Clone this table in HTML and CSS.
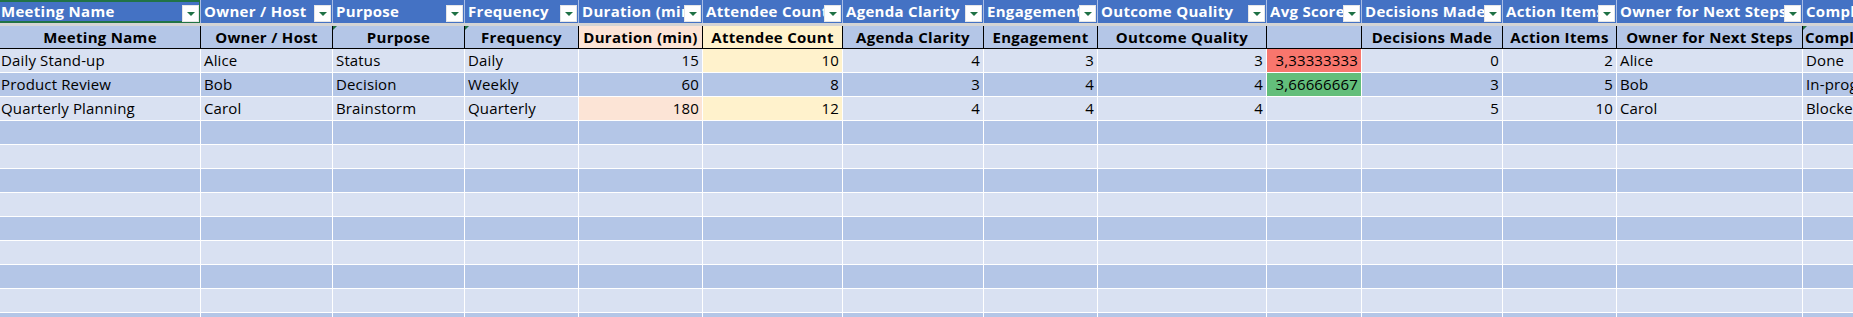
FILE: index.html
```html
<!DOCTYPE html>
<html>
<head>
<meta charset="utf-8">
<link rel="stylesheet" href="styles.css">
</head>
<body>
<div class="sheet">
  <div class="row hdr1">
    <div class="cell sel"><span class="lbl">Meeting Name</span><span class="dd"></span></div>
    <div class="cell"><span class="lbl">Owner / Host</span><span class="dd"></span></div>
    <div class="cell"><span class="lbl">Purpose</span><span class="dd"></span></div>
    <div class="cell"><span class="lbl">Frequency</span><span class="dd"></span></div>
    <div class="cell"><span class="lbl">Duration (min)</span><span class="dd"></span></div>
    <div class="cell"><span class="lbl">Attendee Count</span><span class="dd"></span></div>
    <div class="cell"><span class="lbl">Agenda Clarity</span><span class="dd"></span></div>
    <div class="cell"><span class="lbl">Engagement</span><span class="dd"></span></div>
    <div class="cell"><span class="lbl">Outcome Quality</span><span class="dd"></span></div>
    <div class="cell"><span class="lbl">Avg Score</span><span class="dd"></span></div>
    <div class="cell"><span class="lbl">Decisions Made</span><span class="dd"></span></div>
    <div class="cell"><span class="lbl">Action Items</span><span class="dd"></span></div>
    <div class="cell"><span class="lbl">Owner for Next Steps</span><span class="dd"></span></div>
    <div class="cell"><span class="lbl">Completion Status</span><span class="dd"></span></div>
  </div>
  <div class="row hdr2">
    <div class="cell">Meeting Name</div>
    <div class="cell">Owner / Host</div>
    <div class="cell"><i class="err"></i>Purpose</div>
    <div class="cell"><i class="err"></i>Frequency</div>
    <div class="cell peach">Duration (min)</div>
    <div class="cell yellow">Attendee Count</div>
    <div class="cell">Agenda Clarity</div>
    <div class="cell">Engagement</div>
    <div class="cell">Outcome Quality</div>
    <div class="cell"></div>
    <div class="cell">Decisions Made</div>
    <div class="cell">Action Items</div>
    <div class="cell">Owner for Next Steps</div>
    <div class="cell left"><i class="err"></i>Completion Status</div>
  </div>
  <div class="row data light">
    <div class="cell first">Daily Stand-up</div>
    <div class="cell">Alice</div>
    <div class="cell">Status</div>
    <div class="cell">Daily</div>
    <div class="cell num">15</div>
    <div class="cell num yellow">10</div>
    <div class="cell num">4</div>
    <div class="cell num">3</div>
    <div class="cell num">3</div>
    <div class="cell num red">3,33333333</div>
    <div class="cell num">0</div>
    <div class="cell num">2</div>
    <div class="cell">Alice</div>
    <div class="cell">Done</div>
  </div>
  <div class="row data dark">
    <div class="cell first">Product Review</div>
    <div class="cell">Bob</div>
    <div class="cell">Decision</div>
    <div class="cell">Weekly</div>
    <div class="cell num">60</div>
    <div class="cell num">8</div>
    <div class="cell num">3</div>
    <div class="cell num">4</div>
    <div class="cell num">4</div>
    <div class="cell num green">3,66666667</div>
    <div class="cell num">3</div>
    <div class="cell num">5</div>
    <div class="cell">Bob</div>
    <div class="cell">In-progress</div>
  </div>
  <div class="row data light">
    <div class="cell first">Quarterly Planning</div>
    <div class="cell">Carol</div>
    <div class="cell">Brainstorm</div>
    <div class="cell">Quarterly</div>
    <div class="cell num peach">180</div>
    <div class="cell num yellow">12</div>
    <div class="cell num">4</div>
    <div class="cell num">4</div>
    <div class="cell num">4</div>
    <div class="cell num"></div>
    <div class="cell num">5</div>
    <div class="cell num">10</div>
    <div class="cell">Carol</div>
    <div class="cell">Blocked</div>
  </div>
  <div class="row data dark"><div class="cell"></div><div class="cell"></div><div class="cell"></div><div class="cell"></div><div class="cell"></div><div class="cell"></div><div class="cell"></div><div class="cell"></div><div class="cell"></div><div class="cell"></div><div class="cell"></div><div class="cell"></div><div class="cell"></div><div class="cell"></div></div>
  <div class="row data light"><div class="cell"></div><div class="cell"></div><div class="cell"></div><div class="cell"></div><div class="cell"></div><div class="cell"></div><div class="cell"></div><div class="cell"></div><div class="cell"></div><div class="cell"></div><div class="cell"></div><div class="cell"></div><div class="cell"></div><div class="cell"></div></div>
  <div class="row data dark"><div class="cell"></div><div class="cell"></div><div class="cell"></div><div class="cell"></div><div class="cell"></div><div class="cell"></div><div class="cell"></div><div class="cell"></div><div class="cell"></div><div class="cell"></div><div class="cell"></div><div class="cell"></div><div class="cell"></div><div class="cell"></div></div>
  <div class="row data light"><div class="cell"></div><div class="cell"></div><div class="cell"></div><div class="cell"></div><div class="cell"></div><div class="cell"></div><div class="cell"></div><div class="cell"></div><div class="cell"></div><div class="cell"></div><div class="cell"></div><div class="cell"></div><div class="cell"></div><div class="cell"></div></div>
  <div class="row data dark"><div class="cell"></div><div class="cell"></div><div class="cell"></div><div class="cell"></div><div class="cell"></div><div class="cell"></div><div class="cell"></div><div class="cell"></div><div class="cell"></div><div class="cell"></div><div class="cell"></div><div class="cell"></div><div class="cell"></div><div class="cell"></div></div>
  <div class="row data light"><div class="cell"></div><div class="cell"></div><div class="cell"></div><div class="cell"></div><div class="cell"></div><div class="cell"></div><div class="cell"></div><div class="cell"></div><div class="cell"></div><div class="cell"></div><div class="cell"></div><div class="cell"></div><div class="cell"></div><div class="cell"></div></div>
  <div class="row data dark"><div class="cell"></div><div class="cell"></div><div class="cell"></div><div class="cell"></div><div class="cell"></div><div class="cell"></div><div class="cell"></div><div class="cell"></div><div class="cell"></div><div class="cell"></div><div class="cell"></div><div class="cell"></div><div class="cell"></div><div class="cell"></div></div>
  <div class="row data light"><div class="cell"></div><div class="cell"></div><div class="cell"></div><div class="cell"></div><div class="cell"></div><div class="cell"></div><div class="cell"></div><div class="cell"></div><div class="cell"></div><div class="cell"></div><div class="cell"></div><div class="cell"></div><div class="cell"></div><div class="cell"></div></div>
  <div class="row data dark"><div class="cell"></div><div class="cell"></div><div class="cell"></div><div class="cell"></div><div class="cell"></div><div class="cell"></div><div class="cell"></div><div class="cell"></div><div class="cell"></div><div class="cell"></div><div class="cell"></div><div class="cell"></div><div class="cell"></div><div class="cell"></div></div>
</div>
</body>
</html>
```
FILE: styles.css
```css
html, body {
  margin: 0;
  padding: 0;
  background: #ffffff;
  overflow: hidden;
}
.sheet {
  width: 1853px;
  height: 317px;
  overflow: hidden;
  font-family: "Open Sans", "Liberation Sans", sans-serif;
  font-size: 15px;
  letter-spacing: 0.15px;
  color: #000;
}
.row {
  display: grid;
  grid-template-columns: 201px 132px 132px 114px 124px 140px 141px 114px 169px 95px 141px 114px 186px 120px;
}
.cell {
  box-sizing: border-box;
  position: relative;
  overflow: hidden;
  white-space: nowrap;
}
/* header row 1 */
.hdr1 {
  height: 26px;
  border-bottom: 3px solid #d4d4d4;
  box-sizing: border-box;
}
.hdr1 .cell {
  background: #4472c4;
  color: #ffffff;
  font-weight: bold;
  letter-spacing: 0.3px;
  height: 23px;
  line-height: 23px;
  padding-left: 3px;
  border-right: 1px solid #a9bde4;
  display: flex;
}
.hdr1 .cell.sel {
  padding-left: 1px;
}
.hdr1 .lbl {
  flex: 1;
  overflow: hidden;
  min-width: 0;
}
.hdr1 .dd {
  flex: none;
  width: 17px;
  height: 17px;
  margin: 5px 1px 0 0;
  background: #ffffff;
  box-sizing: border-box;
  border: 1px solid #e6e6e6;
  position: relative;
}
.hdr1 .dd::after {
  content: "";
  position: absolute;
  left: 4px;
  top: 6px;
  border-left: 4px solid transparent;
  border-right: 4px solid transparent;
  border-top: 4px solid #1e7145;
}
.hdr1 .cell.sel::before {
  content: "";
  position: absolute;
  left: 0;
  top: 0;
  right: -1px;
  bottom: 0;
  border-top: 2px solid #217346;
  border-right: 2px solid #217346;
  border-bottom: 2px solid #217346;
  pointer-events: none;
}
/* header row 2 */
.hdr2 .cell {
  background: #b4c6e7;
  font-weight: bold;
  letter-spacing: 0.3px;
  text-align: center;
  height: 23px;
  line-height: 22px;
  border-right: 1px solid #000;
  border-bottom: 1px solid #000;
}
.hdr2 .cell.left {
  text-align: left;
  padding-left: 2px;
}
.err {
  position: absolute;
  left: 0;
  top: 0;
  width: 0;
  height: 0;
  border-top: 4px solid #1e7145;
  border-right: 4px solid transparent;
}
/* data rows */
.data .cell {
  height: 24px;
  line-height: 23px;
  border-right: 1px solid #ffffff;
  border-bottom: 1px solid #ffffff;
  padding: 0 3px 0 3px;
}
.data .cell.first {
  padding-left: 1px;
}
.data.light .cell {
  background: #d9e1f2;
}
.data.dark .cell {
  background: #b4c6e7;
}
.num {
  text-align: right;
}
.hdr2 .cell.peach,
.data .cell.peach {
  background: #fce4d6;
}
.hdr2 .cell.yellow,
.data .cell.yellow {
  background: #fff2cc;
}
.data .cell.red {
  background: #f8766d;
}
.data .cell.green {
  background: #63be7b;
}
```
